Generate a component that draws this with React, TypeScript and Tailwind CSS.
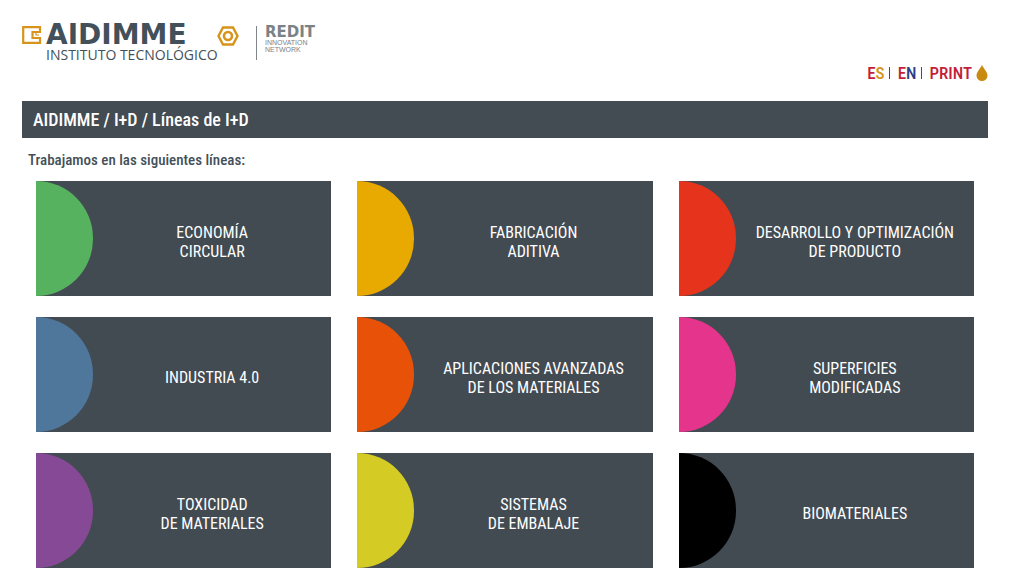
const lines = [
  { label: ['ECONOMÍA', 'CIRCULAR'], color: 'bg-[#56b25e]' },
  { label: ['FABRICACIÓN', 'ADITIVA'], color: 'bg-[#e8a900]' },
  { label: ['DESARROLLO Y OPTIMIZACIÓN', 'DE PRODUCTO'], color: 'bg-[#e6331c]' },
  { label: ['INDUSTRIA 4.0'], color: 'bg-[#4f769b]' },
  { label: ['APLICACIONES AVANZADAS', 'DE LOS MATERIALES'], color: 'bg-[#e75108]' },
  { label: ['SUPERFICIES', 'MODIFICADAS'], color: 'bg-[#e5348c]' },
  { label: ['TOXICIDAD', 'DE MATERIALES'], color: 'bg-[#864996]' },
  { label: ['SISTEMAS', 'DE EMBALAJE'], color: 'bg-[#d4cc25]' },
  { label: ['BIOMATERIALES'], color: 'bg-black' },
];

function Logo() {
  return (
    <a href="#" className="flex items-start text-[#435059]">
      <svg viewBox="0 0 20 18" className="h-[18px] w-5" fill="none" stroke="#d6941a" strokeWidth="2.2">
        <path d="M1.2 1.2H18V6H10.5V12H18V16.8H1.2Z" />
        <path d="M14 6V9H17" strokeWidth="1.2" />
      </svg>
      <span className="ml-1 flex w-[168px] flex-col whitespace-nowrap">
        <span className="font-['DejaVu_Sans'] text-[28px] leading-[18px] font-bold">AIDIMME</span>
        <span className="mt-[5px] font-['Open_Sans'] text-sm leading-3">INSTITUTO TECNOLÓGICO</span>
      </span>
      <svg viewBox="0 0 22 20" className="ml-[3px] h-5 w-[22px]" fill="none" stroke="#d6941a">
        <path d="M6 1.5H16L20.5 10L16 18.5H6L1.5 10Z" strokeWidth="2.4" />
        <circle cx="11" cy="10" r="4" strokeWidth="2.6" />
      </svg>
      <span className="ml-[17px] h-[34px] w-px bg-[#7e868b]" />
      <span className="ml-2 flex flex-col text-[#7b8287]">
        <span className="font-['DejaVu_Sans'] text-[15px] leading-3 font-bold">REDIT</span>
        <span className="mt-px font-['Liberation_Sans'] text-[7px] leading-[7px]">
          INNOVATION
          <br />
          NETWORK
        </span>
      </span>
    </a>
  );
}

export default function App() {
  return (
    <div className="bg-white pt-[26px] pr-9 pb-4 pl-[22px] font-['Roboto_Condensed','Liberation_Sans_Narrow',sans-serif] text-[#435059]">
      <header>
        <Logo />
        <nav className="flex items-center justify-end gap-1 text-[17px] leading-6 font-medium">
          <a href="#" lang="es" className="text-[#c31f3a]">
            E<span className="text-[#d6941a]">S</span>
          </a>
          <span className="h-3 w-px bg-[#435059]" />
          <a href="#" lang="en" className="ml-1 text-[#c31f3a]">
            E<span className="text-[#2c3f86]">N</span>
          </a>
          <span className="h-3 w-px bg-[#435059]" />
          <a href="#" className="ml-1 flex items-center gap-1 text-[#c31f3a]">
            PRINT
            <svg viewBox="0 0 12 16" className="h-4 w-3" fill="#c98a12">
              <path d="M6 0C8 4 11.5 7 11.5 10.5A5.5 5.5 0 0 1 .5 10.5C.5 7 4 4 6 0Z" />
            </svg>
          </a>
        </nav>
      </header>
      <main className="mt-4">
        <h1 className="bg-[#424c52] px-[11px] pt-px text-lg leading-9 font-medium text-white">AIDIMME / I+D / Líneas de I+D</h1>
        <p className="mt-3 px-1.5 text-[15px] leading-5 font-medium">Trabajamos en las siguientes líneas:</p>
        <ul className="mt-[11px] mr-[14px] ml-[14px] grid grid-cols-3 gap-x-[26px] gap-y-[21px]">
          {lines.map(({ label, color }) => (
            <li key={label[0]}>
              <a href="#" className="flex h-[115px] bg-[#434b52] text-white">
                <span className={`w-[57px] shrink-0 rounded-r-full ${color}`} />
                <span className="flex grow flex-col items-center justify-center pt-1.5 text-center text-base leading-[19px]">
                  {label.map((row) => (
                    <span key={row}>{row}</span>
                  ))}
                </span>
              </a>
            </li>
          ))}
        </ul>
      </main>
    </div>
  );
}
